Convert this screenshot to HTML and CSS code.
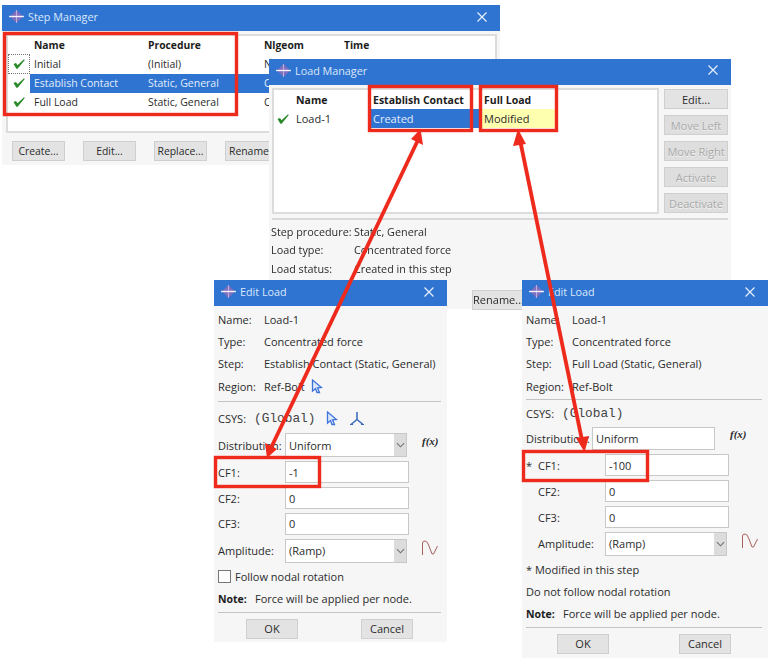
FILE: index.html
```html
<!DOCTYPE html>
<html lang="en">
<head>
<meta charset="utf-8">
<title>Step and Load Managers</title>
<link rel="stylesheet" href="styles.css">
</head>
<body>
<svg class="defs" width="0" height="0" aria-hidden="true">
  <symbol id="app" viewBox="0 0 16 14">
    <path d="M8 0 L15 7 L8 14 L1 7 Z" fill="#7f6fbe"/>
    <path d="M8 0 V14" stroke="#cfc7ea" stroke-width="0.8"/>
    <path d="M0 7 H16" stroke="#f4f1fa" stroke-width="1.5"/>
  </symbol>
  <symbol id="close" viewBox="0 0 12 12">
    <path d="M1.500 1.500 L10.500 10.500 M10.500 1.500 L1.500 10.500" stroke="#e8f0fb" stroke-width="1.200" fill="none"/>
  </symbol>
  <symbol id="check" viewBox="0 0 12 10">
    <path d="M0.500 5 L3 4 L4.500 6.300 L11 0.300 L11.800 1 L4.600 9.800 L3.400 9.800 Z" fill="#2a8a2a"/>
  </symbol>
  <symbol id="cursor" viewBox="0 0 12 15">
    <path d="M1.500 1 L10.500 8.500 L6.500 8.800 L8.500 13.500 L6 13.500 L4.500 9.500 L1.500 12 Z" fill="#dfe9fb" stroke="#3f74dc" stroke-width="1.300"/>
  </symbol>
  <symbol id="axes" viewBox="0 0 16 15">
    <path d="M8 1 V8.500 L2 13.500 M8 8.500 L14 13.500" stroke="#3568b8" stroke-width="1.500" fill="none"/>
    <path d="M1 13.500 H4 M12 13.500 H15" stroke="#3568b8" stroke-width="1.200"/>
  </symbol>
  <symbol id="amp" viewBox="0 0 18 16">
    <path d="M1.500 15 V3 Q1.500 1 4 1 Q6.500 1 8 6 L11 14 L12.500 14 L16.500 6" stroke="#a8615f" stroke-width="1" fill="none"/>
  </symbol>
  <symbol id="chev" viewBox="0 0 10 6">
    <path d="M1 1 L5 5 L9 1" stroke="#6d7177" stroke-width="1.200" fill="none"/>
  </symbol>
</svg>

<main class="desktop">

  <section class="window step-win">
    <header class="titlebar">
      <svg class="app-ico"><use href="#app"/></svg>
      <span class="title">Step Manager</span>
      <svg class="close-ico"><use href="#close"/></svg>
    </header>
    <div class="step-body">
      <div class="table step-table">
        <span class="cell"></span><span class="cell head">Name</span><span class="cell head">Procedure</span><span class="cell head">Nlgeom</span><span class="cell head">Time</span>
        <span class="cell mark focus"><svg class="check-ico"><use href="#check"/></svg></span><span class="cell">Initial</span><span class="cell">(Initial)</span><span class="cell">N</span><span class="cell"></span>
        <span class="cell mark"><svg class="check-ico"><use href="#check"/></svg></span><span class="cell sel">Establish Contact</span><span class="cell sel">Static, General</span><span class="cell sel">O</span><span class="cell sel"></span>
        <span class="cell mark"><svg class="check-ico"><use href="#check"/></svg></span><span class="cell">Full Load</span><span class="cell">Static, General</span><span class="cell">O</span><span class="cell"></span>
      </div>
      <div class="step-buttons">
        <button class="btn">Create...</button>
        <button class="btn">Edit...</button>
        <button class="btn">Replace...</button>
        <button class="btn btn-cut">Rename.</button>
      </div>
    </div>
  </section>

  <section class="window load-win">
    <header class="titlebar titlebar-load">
      <svg class="app-ico"><use href="#app"/></svg>
      <span class="title">Load Manager</span>
      <svg class="close-ico"><use href="#close"/></svg>
    </header>
    <div class="load-body">
      <div class="load-top">
        <div class="table load-table">
          <span class="cell"></span><span class="cell head">Name</span><span class="cell head tight">Establish Contact</span><span class="cell head tight">Full Load</span><span class="cell"></span>
          <span class="cell mark"><svg class="check-ico"><use href="#check"/></svg></span><span class="cell">Load-1</span><span class="cell sel tight">Created</span><span class="cell mod tight">Modified</span><span class="cell"></span>
        </div>
        <div class="side-buttons">
          <button class="btn">Edit...</button>
          <button class="btn off">Move Left</button>
          <button class="btn off">Move Right</button>
          <button class="btn off">Activate</button>
          <button class="btn off">Deactivate</button>
        </div>
      </div>
      <hr class="sep">
      <dl class="load-info">
        <dt>Step procedure:</dt><dd>Static, General</dd>
        <dt>Load type:</dt><dd>Concentrated force</dd>
        <dt>Load status:</dt><dd>Created in this step</dd>
      </dl>
      <div class="load-buttons">
        <button class="btn">Rename...</button>
      </div>
    </div>
  </section>

  <section class="window edit-win edit-a">
    <header class="titlebar">
      <svg class="app-ico"><use href="#app"/></svg>
      <span class="title">Edit Load</span>
      <svg class="close-ico"><use href="#close"/></svg>
    </header>
    <div class="form form-a">
      <div class="row"><span class="lab-s">Name:</span><span>Load-1</span></div>
      <div class="row"><span class="lab-s">Type:</span><span>Concentrated force</span></div>
      <div class="row"><span class="lab-s">Step:</span><span>Establish Contact (Static, General)</span></div>
      <div class="row"><span class="lab-s">Region:</span><span>Ref-Bolt</span><svg class="cursor-ico gap-region"><use href="#cursor"/></svg></div>
      <hr class="sep sep-form">
      <div class="row"><span>CSYS:</span><span class="mono">(Global)</span><svg class="cursor-ico"><use href="#cursor"/></svg><svg class="axes-ico"><use href="#axes"/></svg></div>
      <div class="row"><span class="lab">Distribution:</span><span class="combo"><span class="combo-text">Uniform</span><span class="combo-btn"><svg class="chev-ico"><use href="#chev"/></svg></span></span><i class="fx">f(x)</i></div>
      <div class="row"><span class="lab">CF1:</span><span class="field">-1</span></div>
      <div class="row"><span class="lab">CF2:</span><span class="field">0</span></div>
      <div class="row"><span class="lab">CF3:</span><span class="field">0</span></div>
      <div class="row"><span class="lab">Amplitude:</span><span class="combo"><span class="combo-text">(Ramp)</span><span class="combo-btn"><svg class="chev-ico"><use href="#chev"/></svg></span></span><svg class="amp-ico"><use href="#amp"/></svg></div>
      <div class="row"><span class="checkbox"></span><span>Follow nodal rotation</span></div>
      <div class="row"><b class="note">Note:</b><span>Force will be applied per node.</span></div>
      <hr class="sep sep-form">
      <div class="row actions"><button class="btn wide">OK</button><button class="btn wide">Cancel</button></div>
    </div>
  </section>

  <section class="window edit-win edit-b">
    <header class="titlebar">
      <svg class="app-ico"><use href="#app"/></svg>
      <span class="title">Edit Load</span>
      <svg class="close-ico"><use href="#close"/></svg>
    </header>
    <div class="form form-b">
      <div class="row"><span class="lab-s">Name:</span><span>Load-1</span></div>
      <div class="row"><span class="lab-s">Type:</span><span>Concentrated force</span></div>
      <div class="row"><span class="lab-s">Step:</span><span>Full Load (Static, General)</span></div>
      <div class="row"><span class="lab-s">Region:</span><span>Ref-Bolt</span></div>
      <hr class="sep sep-form sep-top">
      <div class="row"><span>CSYS:</span><span class="mono">(Global)</span></div>
      <div class="row"><span class="lab-wide">Distribution:</span><span class="field field-dist">Uniform</span><i class="fx">f(x)</i></div>
      <div class="row"><span class="star">*</span><span class="lab-in">CF1:</span><span class="field">-100</span></div>
      <div class="row"><span class="star"></span><span class="lab-in">CF2:</span><span class="field">0</span></div>
      <div class="row"><span class="star"></span><span class="lab-in">CF3:</span><span class="field">0</span></div>
      <div class="row"><span class="star"></span><span class="lab-in">Amplitude:</span><span class="combo"><span class="combo-text">(Ramp)</span><span class="combo-btn"><svg class="chev-ico"><use href="#chev"/></svg></span></span><svg class="amp-ico"><use href="#amp"/></svg></div>
      <div class="row"><span>* Modified in this step</span></div>
      <div class="row"><span>Do not follow nodal rotation</span></div>
      <div class="row"><b class="note">Note:</b><span>Force will be applied per node.</span></div>
      <hr class="sep sep-form sep-top">
      <div class="row actions"><button class="btn wide">OK</button><button class="btn wide">Cancel</button></div>
    </div>
  </section>

  <svg class="callouts" viewBox="0 0 774 664" aria-hidden="true">
    <g class="boxes">
      <rect x="4.500" y="33.500" width="232" height="81"/>
      <rect x="369.500" y="86.500" width="102" height="44"/>
      <rect x="480.500" y="86.500" width="76" height="44"/>
      <rect x="215.500" y="457.500" width="104" height="29"/>
      <rect x="523.500" y="451.500" width="124" height="29"/>
    </g>
    <g class="lines">
      <path d="M418 140 L270 450"/>
      <path d="M520 140 L583 445"/>
    </g>
    <g class="heads">
      <path d="M420.500 129 L423 145 L411 139 Z"/>
      <path d="M267 458 L265 443 L277 449 Z"/>
      <path d="M518 129 L526 144 L513 146 Z"/>
      <path d="M584.500 452 L576 438 L589 436 Z"/>
    </g>
  </svg>

</main>
</body>
</html>
```
FILE: styles.css
```css
* { box-sizing: border-box; }
html, body { margin: 0; padding: 0; background: #fff; }
body {
  width: 774px;
  height: 664px;
  overflow: hidden;
  font-family: "Open Sans", "Noto Sans", sans-serif;
  font-size: 11px;
  color: #2b2b2b;
}
.defs { position: absolute; }
.desktop { position: relative; width: 774px; height: 664px; filter: blur(0.45px); }

/* windows on the desktop */
.window { position: absolute; background: #f6f6f6; display: flex; flex-direction: column; }
.step-win { left: 2px; top: 5px; width: 498px; height: 160px; }
.load-win { left: 269px; top: 59px; width: 462px; height: 250px; }
.edit-a { left: 214px; top: 280px; width: 233px; height: 362px; }
.edit-b { left: 522px; top: 280px; width: 246px; height: 378px; }

.titlebar {
  flex: none;
  height: 26px;
  background: #2f74d1;
  color: #dbe8fa;
  display: flex;
  align-items: center;
  padding: 0 12px 3px 7px;
  font-size: 10.8px;
}
.titlebar-load { padding-bottom: 4px; }
.title { flex: 1; margin-left: 4px; }
.app-ico { width: 15px; height: 13px; }
.close-ico { width: 12px; height: 12px; }
.check-ico { width: 12px; height: 10px; }

/* tables */
.table { background: #fff; border: 2px solid #dcdcdc; display: grid; align-content: start; }
.cell { display: flex; align-items: center; padding-left: 4px; white-space: nowrap; overflow: hidden; }
.head { font-weight: 700; font-size: 10.5px; color: #1c1c1c; }
.mark { justify-content: center; padding-left: 0; }
.tight { padding-left: 2px; }
.focus { outline: 1px dotted #777; outline-offset: -1px; }
.sel { background: #2f74d1; color: #e2edfb; }
.mod { background: #ffffb0; }

.step-body { flex: 1; padding: 3px 3px 0 4px; }
.step-table {
  height: 99px;
  grid-template-columns: 22px 114px 116px 80px 1fr;
  grid-template-rows: 18px 19.5px 19px 18.5px;
  font-size: 10.5px;
}
.step-table .head { font-size: 10.3px; }
.step-buttons { display: flex; gap: 18px; padding: 8px 0 0 6px; }
.step-buttons .btn { width: 53px; font-size: 10.4px; }
.step-buttons .btn-cut { text-align: left; padding-left: 3px; }

.btn {
  height: 20px;
  width: 53px;
  padding: 0;
  border: 1px solid #cfcfcf;
  background: #e3e3e3;
  font: inherit;
  color: #2b2b2b;
  white-space: nowrap;
  overflow: hidden;
}
.btn.off { color: #a8a8a8; background: #dedede; text-shadow: 0 1px 0 #f2f2f2; }
.btn.wide { width: 52px; }

.load-body { flex: 1; padding: 3px 3px 0 3px; display: flex; flex-direction: column; }
.load-top { display: flex; gap: 5px; height: 126px; }
.load-table {
  flex: 1;
  grid-template-columns: 18px 79px 111px 73px 1fr;
  grid-template-rows: 19px 19px;
}
.side-buttons { display: flex; flex-direction: column; gap: 6px; padding-top: 1px; }
.side-buttons .btn { width: 64px; }
.sep { border: 0; height: 2px; background: #d9d9d9; margin: 0; }
.load-top + .sep { margin-top: 4px; }
.load-info {
  margin: 2px 0 0 -1px;
  display: grid;
  grid-template-columns: 83px 1fr;
  grid-auto-rows: 18.5px;
  align-items: center;
  font-size: 10.8px;
}
.load-info dt, .load-info dd { margin: 0; }
.load-buttons { display: flex; padding: 12px 0 0 200px; }

/* forms */
.form { display: grid; padding: 2px 6px 0 4px; align-items: center; }
.form-a {
  grid-template-rows: repeat(4, 22.4px) 7px 27.4px 27px 27px 25px 26px 28px 24px 20px 8px 24px;
}
.form-b {
  grid-template-rows: repeat(4, 22.4px) 5.9px 21px 28px 26px 26px 26px 27px 25px 19px 25px 3.5px 28px;
}
.row { display: flex; align-items: center; min-width: 0; white-space: nowrap; }
.lab { width: 67px; flex: none; }
.lab-s { width: 46px; flex: none; }
.lab-wide { width: 66px; flex: none; overflow: hidden; }
.star { width: 12px; flex: none; }
.lab-in { width: 67px; flex: none; }
.mono { font-family: "Liberation Mono", monospace; font-size: 12.8px; margin-left: 8px; color: #444; }
.cursor-ico { width: 12px; height: 15px; margin-left: 11px; }
.gap-region { margin-left: 6px; }
.axes-ico { width: 16px; height: 15px; margin-left: 11px; }
.amp-ico { width: 18px; height: 16px; margin-left: 14px; margin-top: -5px; }
.field {
  height: 22px;
  width: 124px;
  flex: none;
  background: #fff;
  border: 1px solid #c8c8c8;
  display: flex;
  align-items: center;
  padding-left: 3px;
}
.field-dist { width: 123px; height: 23px; }
.combo {
  height: 24px;
  width: 122px;
  flex: none;
  background: #fff;
  border: 1px solid #c8c8c8;
  display: flex;
  align-items: stretch;
}
.combo-text { flex: 1; display: flex; align-items: center; padding-left: 3px; }
.combo-btn { width: 12px; background: #dcdcdc; display: flex; align-items: center; justify-content: center; }
.chev-ico { width: 9px; height: 6px; }
.fx { font-family: "Liberation Serif", serif; font-weight: 700; font-size: 11px; margin-left: 15px; margin-top: -8px; }
.checkbox { width: 13px; height: 13px; background: #fff; border: 1px solid #777; margin-right: 4px; flex: none; }
.note { width: 37px; flex: none; font-size: 10.5px; color: #1c1c1c; }
.sep-form { height: 1px; background: #c4c4c4; }
.sep-top { align-self: start; margin-top: 1px; }
.actions { justify-content: space-between; }
.form-a .actions { padding: 0 28px; }
.form-b .actions { padding: 0 31px; }

/* callouts above all windows */
.callouts { position: absolute; left: 0; top: 0; width: 774px; height: 664px; pointer-events: none; }
.boxes rect { fill: none; stroke: #ee2a1c; stroke-width: 3.4; }
.lines path { fill: none; stroke: #ee2a1c; stroke-width: 3.8; }
.heads path { fill: #ee2a1c; }
```
